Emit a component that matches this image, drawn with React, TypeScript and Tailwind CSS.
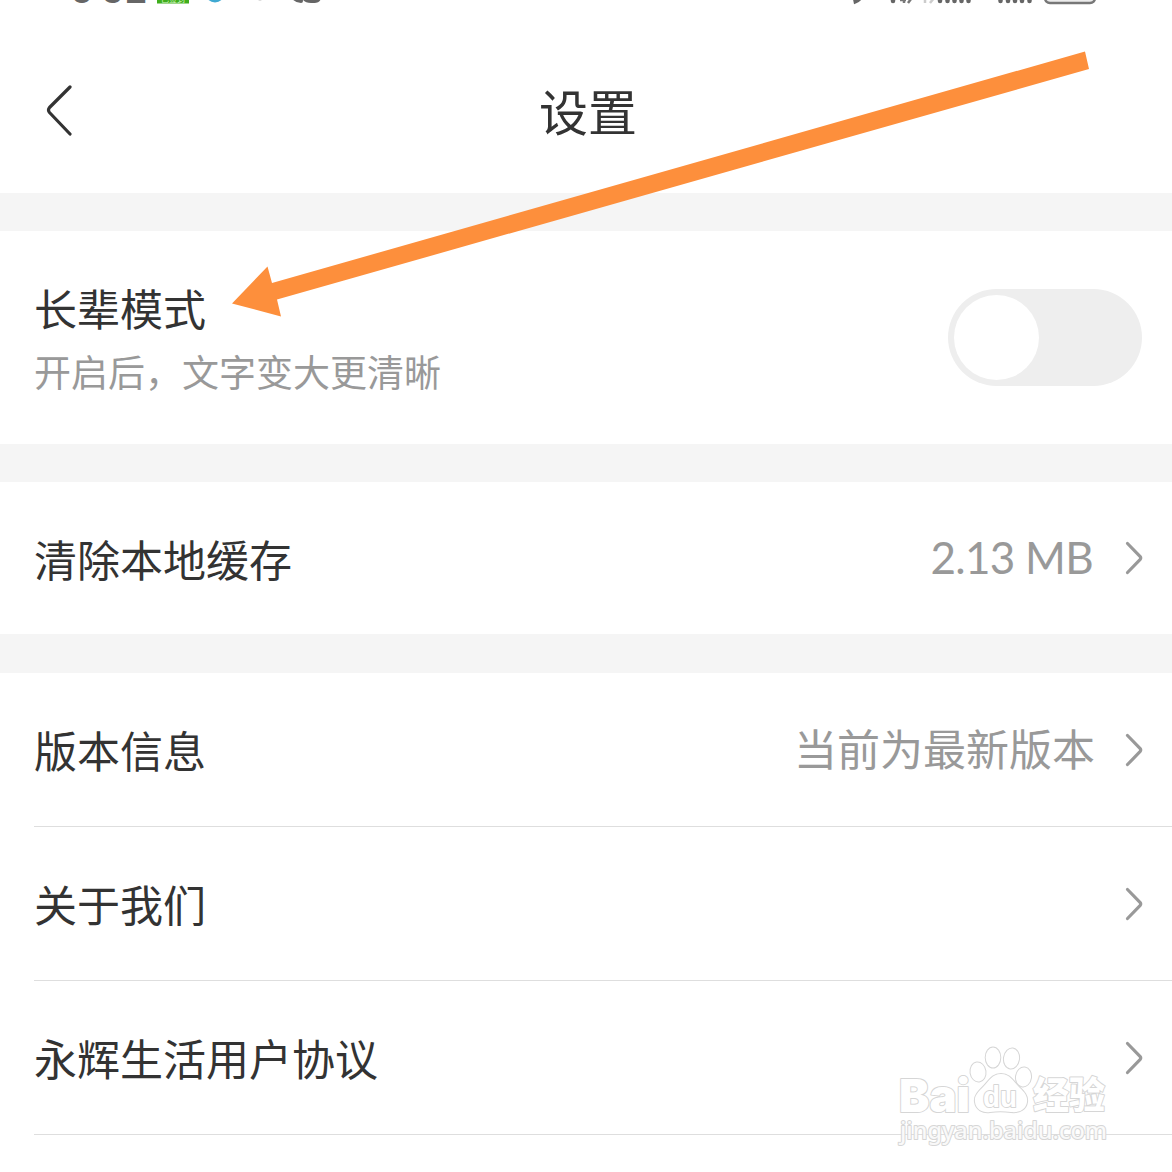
import React, { useState } from 'react';

const aboutItems = [
  { label: '版本信息', value: '当前为最新版本' },
  { label: '关于我们', value: '' },
  { label: '永辉生活用户协议', value: '' },
];

function Chevron() {
  return (
    <svg className="h-9 w-5 shrink-0" viewBox="0 0 20 36" fill="none" stroke="#999" strokeWidth="3.2" strokeLinecap="round" strokeLinejoin="round">
      <path d="M3.5 3.5 L16 16.4 Q17.4 18 16 19.6 L3.5 32.5" />
    </svg>
  );
}

function StatusBar() {
  return (
    <svg className="block h-6 w-full shrink-0" viewBox="0 0 1172 24">
      <text x="71 94 102 125" y="3 -5 3 3" fontSize="38" fontFamily="Roboto" fontWeight="500" fill="#666">8:32</text>
      <rect x="157" y="-20" width="32" height="23.5" fill="#3fae1c" />
      <text x="161" y="2" fontSize="8" fontFamily="Noto Sans CJK SC" fill="#d8f5cb">已签到</text>
      <circle cx="215" cy="-7" r="9.5" fill="#3fa9d2" />
      <circle cx="260" cy="-4" r="4.5" fill="#aaa" />
      <g fill="none" stroke="#666" strokeWidth="4" strokeLinecap="round">
        <path d="M294 -2 Q297 1 301 1" />
        <path d="M304 -2 Q306 1 311 1 L314 1 Q319 1 319 -3" />
        <path d="M310 -4 L314 1" />
        <path d="M855 -1 L855.5 1.5 Q859 0 862 -4" />
      </g>
      <g fill="none" stroke="#666" strokeWidth="4.5" strokeLinecap="round">
        <path d="M893 -3 V1" />
        <path d="M940 -3 V1 M947.5 -3 V1 M954.5 -3 V1 M961.5 -3 V1 M968.5 -3 V1" />
        <path d="M1000.5 -3 V1 M1008 -3 V1 M1015 -3 V1 M1022 -3 V1 M1029.5 -3 V1" />
      </g>
      <g fill="none" stroke="#777" strokeWidth="2.5">
        <path d="M900 0 H906 M904 -3 V3 M911 -1 L908 3" />
        <path d="M925 -3 V3 M934 -2 L930 3" stroke="#ccc" />
      </g>
      <rect x="1045" y="-22" width="50" height="25" rx="5" fill="#ececec" stroke="#777" strokeWidth="2.5" />
    </svg>
  );
}

function Watermark() {
  return (
    <svg className="absolute left-[890px] top-[1040px] h-[120px] w-[230px] [paint-order:stroke]" viewBox="0 0 230 120" fill="#fff" stroke="#d6d6d6" strokeWidth="2" strokeLinejoin="round">
      <text x="9" y="72" fontSize="46" fontFamily="Inter" fontWeight="900" textLength="71" lengthAdjust="spacingAndGlyphs">Bai</text>
      <g>
        <ellipse cx="88" cy="32" rx="7.5" ry="9.5" transform="rotate(-8 88 32)" />
        <ellipse cx="103" cy="17.5" rx="7.3" ry="10" />
        <ellipse cx="121.5" cy="18.5" rx="7.5" ry="10" transform="rotate(8 121.5 18.5)" />
        <ellipse cx="133.5" cy="37" rx="7.5" ry="9.5" transform="rotate(8 133.5 37)" />
        <path d="M111 34 C102 34 99 41 94 46 C88 52 84 56 85 62 C86 70 93 73 100 72 C107 71 114 71 121 72 C130 73 136 69 137 62 C138 55 133 51 128 46 C123 41 120 34 111 34 Z" />
      </g>
      <text x="93" y="66.5" fontSize="29" fontFamily="Liberation Sans" fontWeight="700" textLength="34" lengthAdjust="spacingAndGlyphs">du</text>
      <text x="143" y="69" fontSize="37" fontFamily="Noto Sans CJK SC" fontWeight="900" textLength="72" lengthAdjust="spacingAndGlyphs">经验</text>
      <text x="10" y="99" fontSize="24" fontFamily="Noto Sans" fontWeight="500" fillOpacity="0.85" textLength="207" lengthAdjust="spacingAndGlyphs">jingyan.baidu.com</text>
    </svg>
  );
}

export default function App() {
  const [elderMode, setElderMode] = useState(false);

  return (
    <div className="relative flex h-[1172px] w-[1172px] flex-col overflow-hidden bg-white font-['Noto_Sans_CJK_SC',sans-serif] text-[43px] leading-none text-[#333]">
      <StatusBar />

      {/* Header */}
      <header className="grid h-[169px] shrink-0 grid-cols-[1fr_auto_1fr] items-center pl-[44px] pr-[40px] pt-[3px]">
        <button aria-label="返回" className="h-[52px] w-[30px]">
          <svg className="h-[52px] w-[30px]" viewBox="0 0 30 52" fill="none" stroke="#333" strokeWidth="3.2" strokeLinecap="round" strokeLinejoin="round">
            <path d="M26 3 L5.5 23.5 Q3.5 26 5.5 28.500 L26 50" />
          </svg>
        </button>
        <h1 className="text-[49px] leading-[58px]">设置</h1>
      </header>

      <div className="h-[38px] shrink-0 bg-[#f5f5f5]" />

      {/* Elder mode */}
      <section className="flex h-[213px] shrink-0 items-center justify-between pl-[34px] pr-[30px]">
        <div className="pt-[2px]">
          <p className="leading-[60px]">长辈模式</p>
          <p className="mt-1 text-[37px] leading-[60px] text-[#999]">开启后，文字变大更清晰</p>
        </div>
        <button
          role="switch"
          aria-checked={elderMode}
          onClick={() => setElderMode(!elderMode)}
          className={`flex h-[97px] w-[194px] rounded-full p-[6px] ${elderMode ? 'justify-end bg-orange-400' : 'bg-[#eee]'}`}
        >
          <span className="size-[85px] rounded-full bg-white" />
        </button>
      </section>

      <div className="h-[38px] shrink-0 bg-[#f5f5f5]" />

      {/* Cache */}
      <section className="flex h-[152px] shrink-0 items-center pl-[34px] pr-[28px]">
        <span className="flex-1">清除本地缓存</span>
        <span className="mr-[31px] pb-[2px] font-['Lato'] text-[44px] tracking-[-0.7px] text-[#999]">2.13 MB</span>
        <Chevron />
      </section>

      <div className="h-[39px] shrink-0 bg-[#f5f5f5]" />

      {/* About */}
      <section className="shrink-0 pl-[34px]">
        {aboutItems.map((item) => (
          <div key={item.label} className="flex h-[154px] items-center border-b border-[#dedede] pr-[28px]">
            <span className="flex-1">{item.label}</span>
            <span className="mr-[29px] pb-[5px] text-[#999]">{item.value}</span>
            <Chevron />
          </div>
        ))}
      </section>

      <Watermark />

      {/* Pointer arrow */}
      <svg className="pointer-events-none absolute left-0 top-0 h-[340px] w-full" viewBox="0 0 1172 340">
        <path d="M232 303.5 L267.5 266.5 L272 283 L1085 51.5 L1089 69 L277 299.5 L281 316.5 Z" fill="#fd8f3c" />
      </svg>
    </div>
  );
}
